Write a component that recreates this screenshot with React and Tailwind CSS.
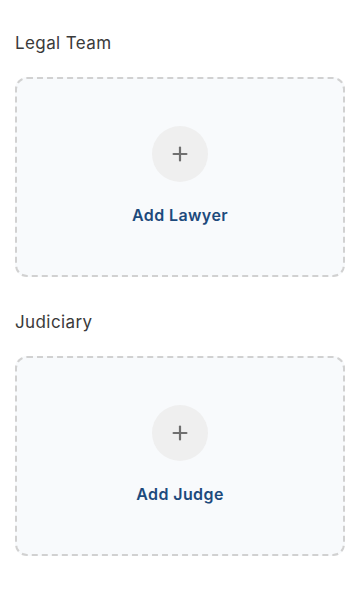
import { Plus } from "lucide-react";

function AddCard({ label }) {
  return (
    <button
      type="button"
      className="w-full flex flex-col items-center border-2 border-dashed border-[#d1d1d1] rounded-xl bg-[#f8fafc] pt-[47px] pb-[48px]"
    >
      <div className="w-14 h-14 rounded-full bg-[#efefef] flex items-center justify-center">
        <Plus className="w-[22px] h-[22px] text-[#6f6f6f]" strokeWidth={2.4} />
      </div>
      <span className="mt-[21px] text-[16px] leading-6 font-semibold tracking-[0.4px] text-[#1d4a7c]">{label}</span>
    </button>
  );
}

export default function App() {
  return (
    <div
      className="bg-white min-h-[593px] px-[15px] pt-[31px] text-[#333]"
      style={{ fontFamily: "Inter, 'Noto Sans', sans-serif" }}
    >
      {/* Legal team */}
      <section>
        <h3 className="text-[17px] leading-6 font-normal tracking-[0.4px] text-[#3a3a3a]">Legal Team</h3>
        <div className="mt-[22px] w-[330px]">
          <AddCard label="Add Lawyer" />
        </div>
      </section>

      {/* Judiciary */}
      <section className="mt-[33px]">
        <h3 className="text-[17px] leading-6 font-normal tracking-[0.4px] text-[#3a3a3a]">Judiciary</h3>
        <div className="mt-[22px] w-[330px]">
          <AddCard label="Add Judge" />
        </div>
      </section>
    </div>
  );
}
